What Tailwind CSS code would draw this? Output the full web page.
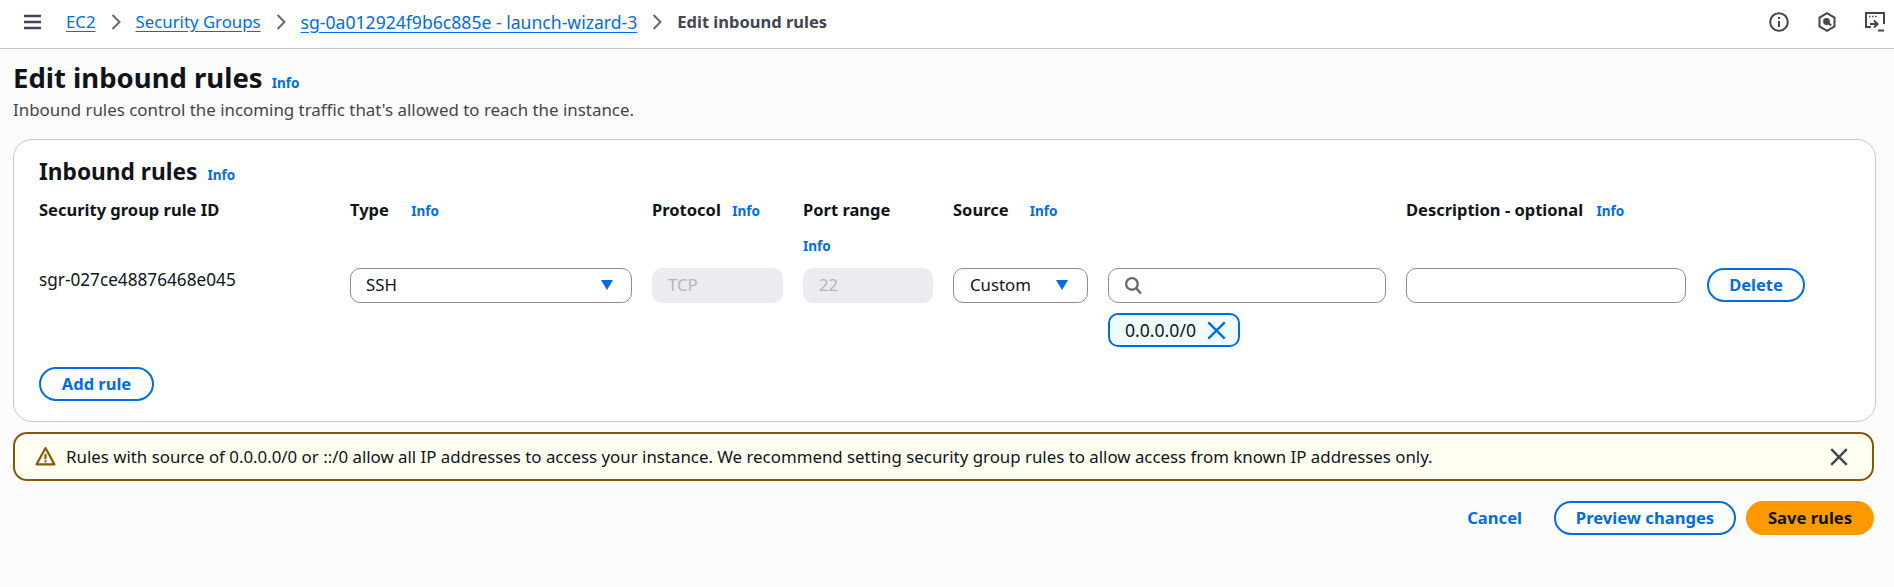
<!DOCTYPE html>
<html lang="en">
<head>
  <meta charset="UTF-8">
  <title>Edit inbound rules</title>
  <script src="https://cdn.jsdelivr.net/npm/@tailwindcss/browser@4"></script>
</head>
<body class="h-screen w-screen overflow-hidden bg-[#fcfcfd] text-[#0f141a] font-['Noto_Sans',sans-serif] text-[16.8px] leading-[24px]">
  <!-- Top bar -->
  <header class="h-[49px] bg-white border-b border-[#c6c6cd] flex items-center pb-[4px] pl-[23px] pr-[9px]">
    <svg class="w-[20px] h-[16px] mr-[23px] text-[#424650]" viewBox="0 0 20 16" fill="none" stroke="currentColor" stroke-width="2.4"><path d="M1 2h17M1 8h17M1 14h17"/></svg>
    <a class="text-[#006ce0] underline underline-offset-3">EC2</a>
    <svg class="w-[10px] h-[18px] mx-[15px] text-[#656871]" viewBox="0 0 10 18" fill="none" stroke="currentColor" stroke-width="2"><path d="M1.5 2l7 7-7 7"/></svg>
    <a class="text-[#006ce0] underline underline-offset-3">Security Groups</a>
    <svg class="w-[10px] h-[18px] mx-[15px] text-[#656871]" viewBox="0 0 10 18" fill="none" stroke="currentColor" stroke-width="2"><path d="M1.5 2l7 7-7 7"/></svg>
    <a class="text-[#006ce0] underline underline-offset-3 text-[17.6px]">sg-0a012924f9b6c885e - launch-wizard-3</a>
    <svg class="w-[10px] h-[18px] mx-[15px] text-[#656871]" viewBox="0 0 10 18" fill="none" stroke="currentColor" stroke-width="2"><path d="M1.5 2l7 7-7 7"/></svg>
    <span class="font-bold text-[#424650] text-[16.5px]">Edit inbound rules</span>
    <div class="ml-auto flex items-center gap-[28px] text-[#424650]">
      <svg class="w-[20px] h-[20px]" viewBox="0 0 20 20" fill="none" stroke="currentColor" stroke-width="2"><circle cx="10" cy="10" r="8.8"/><path d="M10 9v6M10 5v2"/></svg>
      <svg class="w-[20px] h-[20px]" viewBox="0 0 20 20" fill="none" stroke="currentColor" stroke-width="2"><path d="M10 1.2l7.5 4.4v8.8L10 18.8l-7.5-4.4V5.6z"/><circle cx="9.5" cy="9.5" r="2.4" fill="currentColor"/><path d="M11 11l3.2 2.4"/></svg>
      <svg class="w-[20px] h-[20px]" viewBox="0 0 20 20" fill="none" stroke="currentColor" stroke-width="2"><path d="M6 15H1V1h18v11"/><path d="M4 4.5h1.5M7 4.5h1.5M10 4.5h1.5" stroke-width="1.6"/><path d="M5 12h7M9 8.5l3.5 3.5L9 15.5M13 18.5h6"/></svg>
    </div>
  </header>

  <main class="px-[13px]">
    <!-- Page heading -->
    <div class="pt-[11px] flex items-baseline gap-[9px]">
      <h1 class="text-[27.5px] leading-[36px] font-bold">Edit inbound rules</h1>
      <a class="text-[13.5px] font-bold text-[#006ce0]">Info</a>
    </div>
    <p class="mt-[2px] text-[16.9px] text-[#424650]">Inbound rules control the incoming traffic that's allowed to reach the instance.</p>

    <!-- Rules card -->
    <section class="mt-[17px] w-[1863px] h-[283px] bg-white border border-[#c6c6cd] rounded-[19px] pl-[25px] pt-[17px]">
      <div class="flex items-baseline gap-[10px]">
        <h2 class="text-[22.7px] leading-[30px] font-bold">Inbound rules</h2>
        <a class="text-[13.5px] font-bold text-[#006ce0]">Info</a>
      </div>
      <div class="mt-[11px] grid grid-cols-[311px_302px_151px_150px_155px_298px_302px_auto] grid-rows-[67px_auto] justify-start text-[16.5px]">
        <div class="font-bold">Security group rule ID</div>
        <div class="font-bold">Type <a class="ml-[18px] text-[13.5px] text-[#006ce0]">Info</a></div>
        <div class="font-bold">Protocol <a class="ml-[7px] text-[13.5px] text-[#006ce0]">Info</a></div>
        <div class="font-bold">Port range<a class="block mt-[14px] text-[13.5px] leading-[20px] text-[#006ce0]">Info</a></div>
        <div class="font-bold">Source <a class="ml-[17px] text-[13.5px] text-[#006ce0]">Info</a></div>
        <div></div>
        <div class="font-bold">Description - optional <a class="ml-[9px] text-[13.5px] text-[#006ce0]">Info</a></div>
        <div></div>

        <div class="pt-[3px] text-[17.2px]">sgr-027ce48876468e045</div>
        <div class="pr-[20px] pt-[3px]">
          <div class="h-[35px] border border-[#8c8c94] rounded-[10px] flex items-center justify-between pb-[1px] pl-[15px] pr-[18px] text-[16.8px]">SSH
            <svg class="w-[12px] h-[10px] text-[#006ce0]" viewBox="0 0 12 10" fill="currentColor"><path d="M0 0h12L6 10z"/></svg>
          </div>
        </div>
        <div class="pr-[20px] pt-[3px]">
          <div class="h-[35px] bg-[#ebebf0] rounded-[10px] flex items-center pb-[1px] pl-[16px] text-[16.8px] text-[#b4b4bb]">TCP</div>
        </div>
        <div class="pr-[20px] pt-[3px]">
          <div class="h-[35px] bg-[#ebebf0] rounded-[10px] flex items-center pb-[1px] pl-[16px] text-[16.8px] text-[#b4b4bb]">22</div>
        </div>
        <div class="pr-[20px] pt-[3px]">
          <div class="h-[35px] border border-[#8c8c94] rounded-[10px] flex items-center justify-between pb-[1px] pl-[16px] pr-[19px] text-[16.8px]">Custom
            <svg class="w-[12px] h-[10px] text-[#006ce0]" viewBox="0 0 12 10" fill="currentColor"><path d="M0 0h12L6 10z"/></svg>
          </div>
        </div>
        <div class="pr-[20px] pt-[3px]">
          <div class="h-[35px] border border-[#8c8c94] rounded-[10px] flex items-center pl-[15px]">
            <svg class="w-[19px] h-[19px] text-[#656871]" viewBox="0 0 18 18" fill="none" stroke="currentColor" stroke-width="2.2"><circle cx="7.5" cy="7.5" r="5.5"/><path d="M11.5 11.5L16 16.5"/></svg>
          </div>
          <div class="mt-[10px] w-[132px] h-[34px] bg-[#f0fbff] border-2 border-[#006ce0] rounded-[10px] flex items-center pl-[15px] gap-[10px] text-[17.6px]">0.0.0.0/0
            <svg class="w-[21px] h-[21px] text-[#006ce0]" viewBox="0 0 18 18" fill="none" stroke="currentColor" stroke-width="2"><path d="M2 2l14 14M16 2L2 16"/></svg>
          </div>
        </div>
        <div class="pr-[22px] pt-[3px]">
          <div class="h-[35px] border border-[#8c8c94] rounded-[10px]"></div>
        </div>
        <div class="pt-[3px] -ml-[1px]">
          <button class="h-[34px] w-[98px] border-2 border-[#006ce0] rounded-full font-bold text-[#006ce0] bg-white">Delete</button>
        </div>
      </div>
      <button class="mt-[20px] h-[34px] w-[115px] border-2 border-[#006ce0] rounded-full font-bold text-[16.5px] text-[#006ce0] bg-white block">Add rule</button>
    </section>

    <!-- Warning -->
    <div class="mt-[10px] w-[1861px] h-[49px] bg-[#fffef0] border-2 border-[#855900] rounded-[14px] flex items-center pl-[20px] pr-[23px]">
      <svg class="w-[21px] h-[21px] mr-[10px] text-[#855900]" viewBox="0 0 20 20" fill="none" stroke="currentColor" stroke-width="2"><path d="M10 2L1.5 17.5h17z" stroke-linejoin="round"/><path d="M10 7.5v5M10 13.5v2"/></svg>
      <span class="text-[16.85px] whitespace-nowrap">Rules with source of 0.0.0.0/0 or ::/0 allow all IP addresses to access your instance. We recommend setting security group rules to allow access from known IP addresses only.</span>
      <svg class="ml-auto w-[20px] h-[20px] text-[#424650]" viewBox="0 0 18 18" fill="none" stroke="currentColor" stroke-width="2.2"><path d="M2 2l14 14M16 2L2 16"/></svg>
    </div>

    <!-- Actions -->
    <div class="mt-[20px] w-[1861px] flex items-center justify-end text-[16.6px]">
      <a class="font-bold text-[#006ce0] mr-[32px]">Cancel</a>
      <button class="h-[34px] w-[182px] border-2 border-[#006ce0] rounded-full font-bold text-[#006ce0] bg-white mr-[10px]">Preview changes</button>
      <button class="h-[34px] w-[128px] rounded-full font-bold bg-[#ff9900] text-[#0f141a]">Save rules</button>
    </div>
  </main>
</body>
</html>
